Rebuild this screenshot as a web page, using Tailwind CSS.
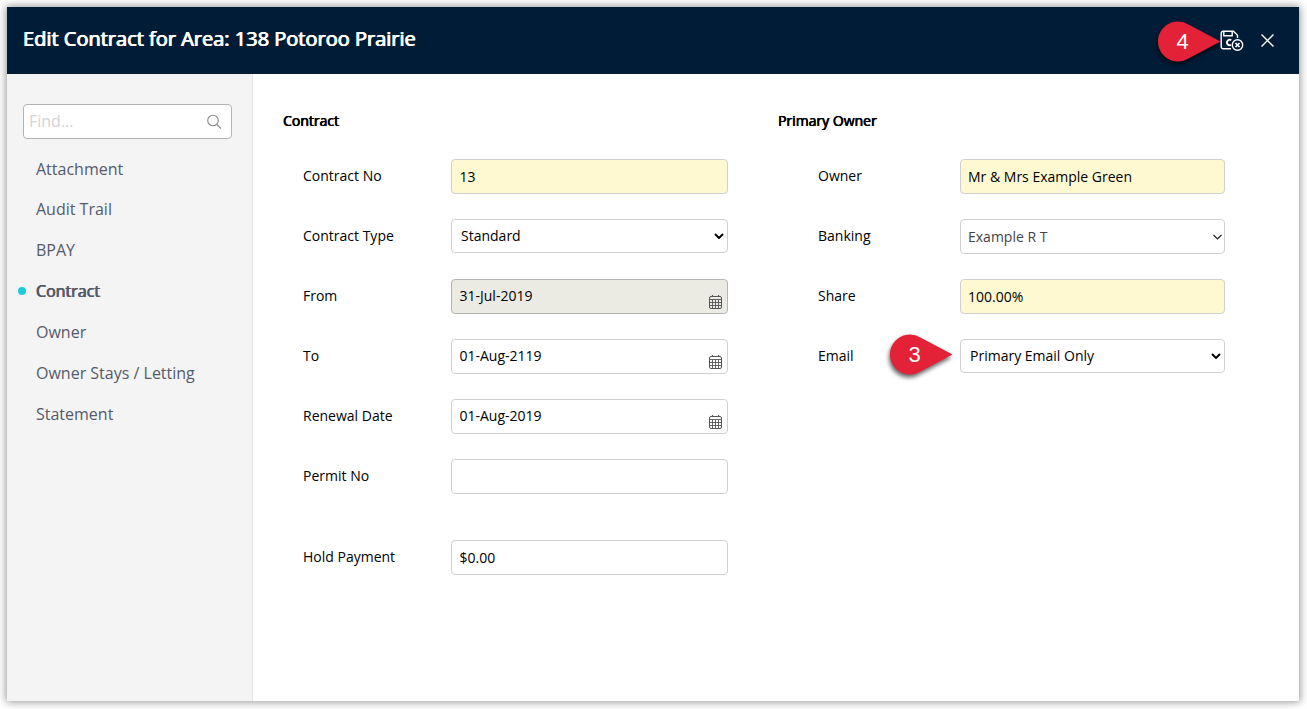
<!DOCTYPE html>
<html lang="en">
  <head>
    <meta charset="UTF-8" />
    <meta name="viewport" content="width=device-width, initial-scale=1.0" />
    <title>Edit Contract</title>
    <script src="https://cdn.jsdelivr.net/npm/@tailwindcss/browser@4"></script>
  </head>
  <body
    class="h-screen overflow-hidden bg-white p-[7px_8px_8px_7px] font-['Open_Sans',sans-serif] text-sm text-black"
  >
    <!-- Icons used more than once -->
    <svg class="hidden">
      <symbol id="calendar" viewBox="0 0 14 15">
        <g fill="none" stroke="currentColor">
          <rect x="0.5" y="1.5" width="12" height="12" rx="1.5" />
          <path d="M1 4.5h11M1 7.5h11M1 10.5h11M3.5 5v8.5M6.5 5v8.5M9.5 5v8.5" stroke-width="0.9" />
          <path d="M3.5 0v2M9.5 0v2" stroke-width="1.2" />
        </g>
      </symbol>
      <symbol id="chevron" viewBox="0 0 10 6">
        <path d="M1 1l4 4 4-4" fill="none" stroke="currentColor" />
      </symbol>
    </svg>

    <div
      class="flex h-[694px] flex-col bg-white shadow-[0_0_8px_1px_rgba(0,0,0,0.42)]"
    >
      <header
        class="flex h-[67px] shrink-0 items-center justify-between bg-[#001c36] pl-4 pr-6 text-white"
      >
        <h1
          class="pb-[3px] text-[20px] leading-7 [text-shadow:0.6px_0_0_currentColor,-0.4px_0_0_currentColor]"
        >
          Edit Contract for Area: 138 Potoroo Prairie
        </h1>
        <div class="relative flex items-center gap-[17px]">
          <!-- Step 4 callout -->
          <div class="absolute -left-[62px] -top-[9px] h-[41px] w-[63px]">
            <svg class="absolute inset-0 overflow-visible drop-shadow-[-1px_3px_2px_rgba(0,0,0,0.6)]" width="63" height="41" viewBox="0 0 63 41">
              <path d="M62.5 20.5L30.5 37.5A20 20 0 1 1 30.5 3.5Z" fill="#e32237" />
            </svg>
            <span class="absolute left-0 top-0 w-[49px] text-center font-['Liberation_Sans',sans-serif] text-[22px] leading-[41px]">4</span>
          </div>
          <svg class="relative" width="24" height="22" viewBox="0 0 24 22" fill="none" stroke="currentColor" stroke-width="1.4">
            <path d="M11 18.8H3.2a2 2 0 0 1-2-2V3.2a2 2 0 0 1 2-2H13.5L17.5 5.2V8" />
            <path d="M3.8 1.5V5.8H12.2V1.5" />
            <path d="M11.3 10.3A2.7 2.7 0 1 0 11 14.8" stroke-width="1.8" />
            <circle cx="17.5" cy="15" r="5.2" />
            <path d="M15.5 13l4 4M19.5 13l-4 4" stroke-width="1.7" />
          </svg>
          <svg class="mr-px" width="13" height="14" viewBox="0 0 13 14" fill="none" stroke="currentColor" stroke-width="1.4">
            <path d="M0.5 0.5l12 12M12.5 0.5L0.5 12.5" />
          </svg>
        </div>
      </header>

      <div class="flex grow">
        <aside
          class="w-[246px] shrink-0 border-r border-[#e6e6e6] bg-[#f4f4f4] pl-4 pt-[30px] text-base text-[#555a6b]"
        >
          <div
            class="flex h-[35px] w-[209px] items-center justify-between rounded border border-[#b3b3b3] bg-white pl-[5px] pr-[9px]"
          >
            <input class="w-40 pb-[2px] placeholder:text-[#d3d3d3]" placeholder="Find..." />
            <svg width="16" height="16" viewBox="0 0 16 16" fill="none" stroke="#8c8c8c" stroke-width="1.1">
              <circle cx="7" cy="6.5" r="5.3" />
              <path d="M11 10.5l4 4" />
            </svg>
          </div>
          <ul class="mt-[9.6px] [&>li]:h-[40.86px] [&>li]:pl-[13px] [&>li]:leading-[41px]">
            <li>Attachment</li>
            <li>Audit Trail</li>
            <li>BPAY</li>
            <li class="relative [text-shadow:0.4px_0_0_currentColor,-0.4px_0_0_currentColor]">
              <span class="absolute -left-[5px] top-4 size-2 rounded-full bg-[#1dccd8]"></span>Contract
            </li>
            <li>Owner</li>
            <li>Owner Stays / Letting</li>
            <li>Statement</li>
          </ul>
        </aside>

        <main class="flex gap-[50px] pl-[30px] pt-[37px]">
          <section class="w-[445px]">
            <h2 class="leading-5 [text-shadow:0.4px_0_0_currentColor,-0.3px_0_0_currentColor]">Contract</h2>
            <div class="mt-7 grid grid-cols-[148px_277px] auto-rows-[35px] gap-y-[25px] pl-5 [&>label]:pt-[7px] [&>label]:leading-5">
              <label>Contract No</label>
              <input value="13" class="h-[35px] rounded border border-[#d0d0d0] bg-[#fff9d1] px-[7.5px]" />

              <label>Contract Type</label>
              <div class="flex h-[34px] items-center justify-between rounded border border-[#d0d0d0] pl-[9px] pr-[3px]">
                Standard
                <svg class="h-[6px] w-[10px] stroke-2"><use href="#chevron" /></svg>
              </div>

              <label>From</label>
              <div class="flex h-[35px] justify-between rounded border border-[#b5b5b0] bg-[#ebebe4] pl-[7.5px] pr-1 leading-8">
                31-Jul-2019
                <svg class="mt-[15px] h-[15px] w-[14px] text-[#555]"><use href="#calendar" /></svg>
              </div>

              <label>To</label>
              <div class="flex h-[35px] justify-between rounded border border-[#d0d0d0] pl-[7.5px] pr-1 leading-8">
                01-Aug-2119
                <svg class="mt-[15px] h-[15px] w-[14px] text-[#555]"><use href="#calendar" /></svg>
              </div>

              <label>Renewal Date</label>
              <div class="flex h-[35px] justify-between rounded border border-[#d0d0d0] pl-[7.5px] pr-1 leading-8">
                01-Aug-2019
                <svg class="mt-[15px] h-[15px] w-[14px] text-[#555]"><use href="#calendar" /></svg>
              </div>

              <label>Permit No</label>
              <input class="h-[35px] rounded border border-[#d0d0d0] px-[7.5px]" />

              <label class="mt-[21px]">Hold Payment</label>
              <input value="$0.00" class="mt-[21px] h-[35px] rounded border border-[#d0d0d0] px-[7.5px]" />
            </div>
          </section>

          <section class="w-[447px]">
            <h2 class="leading-5 [text-shadow:0.4px_0_0_currentColor,-0.3px_0_0_currentColor]">Primary Owner</h2>
            <div class="mt-7 grid grid-cols-[142px_265px] auto-rows-[35px] gap-y-[25px] pl-10 [&>label]:pt-[7px] [&>label]:leading-5">
              <label>Owner</label>
              <input value="Mr &amp; Mrs Example Green" class="h-[35px] rounded border border-[#d0d0d0] bg-[#fff9d1] px-[7px]" />

              <label>Banking</label>
              <div class="flex h-[35px] items-center justify-between rounded border border-[#d0d0d0] pl-[7px] pr-[1px] text-[#444]">
                Example R T
                <svg class="h-[6px] w-[11px] stroke-[1.2] text-[#222]"><use href="#chevron" /></svg>
              </div>

              <label>Share</label>
              <input value="100.00%" class="h-[35px] rounded border border-[#d0d0d0] bg-[#fff9d1] px-[7px]" />

              <label>Email</label>
              <div class="relative flex h-[34px] items-center justify-between rounded border border-[#d0d0d0] pl-[9px] pr-[3px]">
                <!-- Step 3 callout -->
                <div class="absolute -left-[71px] -top-[6.5px] h-[41px] w-[63px]">
                  <svg class="absolute inset-0 overflow-visible drop-shadow-[-1px_3px_2px_rgba(0,0,0,0.6)]" width="63" height="41" viewBox="0 0 63 41">
                    <path d="M62.5 20.5L30.5 37.5A20 20 0 1 1 30.5 3.5Z" fill="#e32237" />
                  </svg>
                  <span class="absolute left-0 top-0 w-[49px] text-center font-['Liberation_Sans',sans-serif] text-[22px] leading-[42px] text-white">3</span>
                </div>
                Primary Email Only
                <svg class="h-[6px] w-[10px] stroke-2"><use href="#chevron" /></svg>
              </div>
            </div>
          </section>
        </main>
      </div>
    </div>
  </body>
</html>
